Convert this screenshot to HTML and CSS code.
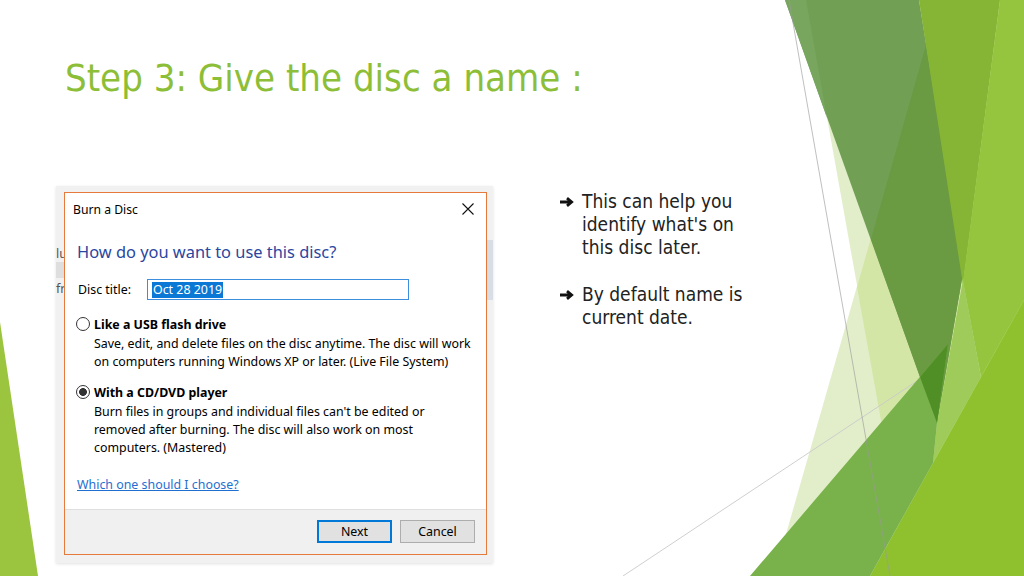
FILE: index.html
```html
<!DOCTYPE html>
<html lang="en">
<head>
<meta charset="utf-8">
<title>Step 3: Give the disc a name</title>
<link rel="stylesheet" href="styles.css">
</head>
<body>
<div class="slide">
  <svg class="deco" viewBox="0 0 1024 576" width="1024" height="576" aria-hidden="true">
    <polygon points="939,0 774,576 1024,576 1024,0" fill="#e2eeca"/>
    <polygon points="806,0 909,576 1024,576 1024,0" fill="#e2eeca"/>
    <polygon points="939,0 857,287 909,576 1024,576 1024,0" fill="#d3e6a6"/>
    <line x1="623" y1="576" x2="1024" y2="310" stroke="#c9c9c9" stroke-width="0.9"/>
    <polygon points="785,0 919,0 963,273 937,423 920,377" fill="#71a054"/>
    <polygon points="785,0 806,0 827,118" fill="#78a65f"/>
    <polygon points="926,45 963,273 937,423 920,377 871,239" fill="#6a9a41"/>
    <polygon points="919,0 1000,0 963,285" fill="#86b535"/>
    <polygon points="1000,0 1024,0 1024,300 981,377 963,282" fill="#95c53f"/>
    <polygon points="963,280 981,377 933,463 937,423" fill="#9fcb5a"/>
    <polygon points="1024,300 1024,576 870,576" fill="#8fc12f"/>
    <polygon points="750,576 948,344 937,423 933,463 870,576" fill="#79b14a"/>
    <polygon points="920,377 948,344 937,423" fill="#4f8f26"/>
    <polygon points="0,322 38,576 0,576" fill="#9bc43f"/>
    <line x1="789" y1="0" x2="890" y2="576" stroke="#9a9a9a" stroke-width="0.8" stroke-opacity="0.8"/>
  </svg>

  <h1 class="title">Step 3: Give the disc a name :</h1>

  <div class="row">
    <div class="shot">
      <div class="backdrop">
        <span class="bd-lu">lu</span>
        <span class="bd-bar"></span>
        <span class="bd-fr">fr</span>
        <span class="bd-strip"></span>
      </div>
      <div class="dialog">
        <div class="dlg-head">
          <span class="dlg-caption">Burn a Disc</span>
          <svg class="dlg-close" viewBox="0 0 12 12" width="12" height="12" aria-hidden="true">
            <path d="M0.5 0.5 L11.5 11.5 M11.5 0.5 L0.5 11.5" stroke="#111" stroke-width="1.1" fill="none"/>
          </svg>
        </div>
        <div class="dlg-body">
          <div class="main-instr">How do you want to use this disc?</div>
          <div class="field">
            <span class="field-label">Disc title:</span>
            <div class="textbox"><span class="sel">Oct 28 2019</span></div>
          </div>
          <div class="option">
            <div class="opt-head"><span class="radio"></span><span class="opt-label">Like a USB flash drive</span></div>
            <p class="desc">Save, edit, and delete files on the disc anytime. The disc will work<br>on computers running Windows XP or later. (Live File System)</p>
          </div>
          <div class="option option-2">
            <div class="opt-head"><span class="radio checked"></span><span class="opt-label">With a CD/DVD player</span></div>
            <p class="desc">Burn files in groups and individual files can't be edited or<br>removed after burning. The disc will also work on most<br>computers. (Mastered)</p>
          </div>
          <span class="link">Which one should I choose?</span>
        </div>
        <div class="dlg-foot">
          <span class="btn btn-default">Next</span>
          <span class="btn">Cancel</span>
        </div>
      </div>
    </div>

    <ul class="bullets">
      <li>
        <span class="arrow"><svg viewBox="0 0 14 10" width="14" height="10" aria-hidden="true"><path d="M0 5 H11.5 M7 1.2 L11.6 5 L7 8.8" stroke="#111" stroke-width="2.8" fill="none" stroke-linejoin="miter"/></svg></span>
        <span class="btext">This can help you<br>identify what's on<br>this disc later.</span>
      </li>
      <li>
        <span class="arrow"><svg viewBox="0 0 14 10" width="14" height="10" aria-hidden="true"><path d="M0 5 H11.5 M7 1.2 L11.6 5 L7 8.8" stroke="#111" stroke-width="2.8" fill="none" stroke-linejoin="miter"/></svg></span>
        <span class="btext">By default name is<br>current date.</span>
      </li>
    </ul>
  </div>
</div>
</body>
</html>
```

FILE: styles.css
```css
* { box-sizing: border-box; }

html, body {
  margin: 0;
  padding: 0;
}

body {
  width: 1024px;
  height: 576px;
  overflow: hidden;
  background: #ffffff;
}

.slide {
  position: relative;
  width: 1024px;
  height: 576px;
  overflow: hidden;
  background: #ffffff;
  display: flex;
  flex-direction: column;
  font-family: "DejaVu Sans Condensed", "DejaVu Sans", sans-serif;
  font-stretch: condensed;
}

.deco {
  position: absolute;
  left: 0;
  top: 0;
  z-index: 0;
}

.title {
  position: relative;
  z-index: 1;
  margin: 0;
  padding: 55px 0 0 65px;
  font-size: 38px;
  line-height: 46px;
  font-weight: normal;
  color: #8dbe38;
}

.row {
  position: relative;
  z-index: 1;
  display: flex;
  align-items: flex-start;
  margin-top: 85px;
  padding-left: 56px;
}

/* screenshot of the Windows dialog */
.shot {
  position: relative;
  flex: none;
  width: 437px;
  height: 377px;
  padding: 6px 6px 8px 8px;
  background: #f1f1f1;
  box-shadow: 0 1px 3px rgba(0, 0, 0, 0.12);
  font-family: "Noto Sans", "Open Sans", sans-serif;
  font-stretch: normal;
}

.backdrop span {
  position: absolute;
}

.bd-lu, .bd-fr {
  left: 0;
  font-size: 12.4px;
  line-height: 14px;
  color: #555;
}

.bd-lu { top: 61px; }
.bd-fr { top: 96px; }

.bd-bar {
  left: 0;
  top: 76px;
  width: 100%;
  height: 16px;
  background: #dedede;
}

.bd-strip {
  right: 0;
  top: 54px;
  width: 6px;
  height: 60px;
  background: #d9dee6;
}

.dialog {
  position: relative;
  width: 423px;
  height: 363px;
  border: 1px solid #e57a3c;
  background: #ffffff;
  display: flex;
  flex-direction: column;
  font-size: 12.4px;
  color: #000;
}

.dlg-head {
  height: 33px;
  flex: none;
  display: flex;
  align-items: center;
  justify-content: space-between;
  padding: 0 12px 0 8px;
}

.dlg-caption {
  font-size: 12.2px;
}

.dlg-close {
  display: block;
  margin-top: -1px;
}

.dlg-body {
  flex: 1;
  display: flex;
  flex-direction: column;
  align-items: flex-start;
  padding: 15px 12px 0 12px;
}

.main-instr {
  font-size: 16.4px;
  line-height: 22px;
  color: #2a46a0;
}

.field {
  margin-top: 16px;
  display: flex;
  align-items: center;
  height: 21px;
}

.field-label {
  width: 70px;
  padding-left: 1px;
}

.textbox {
  width: 262px;
  height: 21px;
  border: 1px solid #3d8ede;
  padding: 0 4px;
  display: flex;
  align-items: center;
}

.sel {
  background: #0a78d4;
  color: #ffffff;
  line-height: 16px;
  padding: 0 1px;
}

.option {
  margin-top: 15px;
}

.option-2 {
  margin-top: 12px;
}

.opt-head {
  display: flex;
  align-items: center;
  height: 18px;
}

.radio {
  width: 14px;
  height: 14px;
  border-radius: 50%;
  border: 1px solid #333;
  background: #ffffff;
  margin-left: -1px;
  margin-right: 4px;
}

.radio.checked {
  background: radial-gradient(circle, #333 0 3.6px, #ffffff 4.2px);
}

.opt-label {
  font-weight: bold;
}

.desc {
  margin: 2px 0 0 17px;
  line-height: 18px;
  white-space: nowrap;
}

.link {
  margin-top: 19px;
  line-height: 18px;
  color: #1f6fd1;
  text-decoration: underline;
}

.dlg-foot {
  flex: none;
  height: 45px;
  border-top: 1px solid #dfdfdf;
  background: #f0f0f0;
  display: flex;
  justify-content: flex-end;
  align-items: flex-start;
  gap: 8px;
  padding: 10px 11px 0 0;
}

.btn {
  width: 75px;
  height: 23px;
  border: 1px solid #adadad;
  background: #e1e1e1;
  display: flex;
  align-items: center;
  justify-content: center;
}

.btn-default {
  border-color: #0078d7;
  box-shadow: inset 0 0 0 1px #0078d7;
}

/* bullets */
.bullets {
  list-style: none;
  margin: 4px 0 0 66px;
  padding: 0;
  font-size: 19px;
  line-height: 23px;
  color: #222;
}

.bullets li {
  display: flex;
}

.bullets li + li {
  margin-top: 24px;
}

.arrow {
  width: 23px;
  flex: none;
  padding-left: 1px;
}

.arrow svg {
  display: block;
  margin-top: 7px;
}
```
